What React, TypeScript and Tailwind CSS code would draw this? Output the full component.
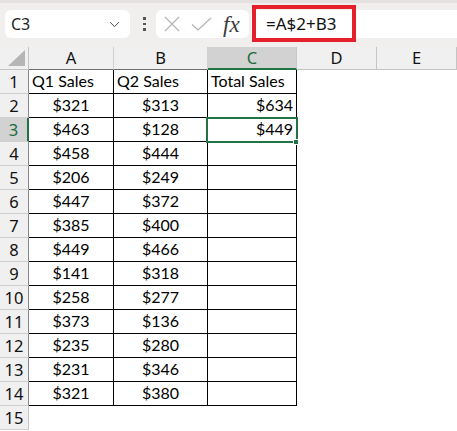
import { ChevronDown } from "lucide-react";

const colWidths = "grid-cols-[29px_85px_94px_89px_80px_80px]";

const rows: (number | string | null)[][] = [
  ["Q1 Sales", "Q2 Sales", "Total Sales"],
  [321, 313, 634],
  [463, 128, 449],
  [458, 444, null],
  [206, 249, null],
  [447, 372, null],
  [385, 400, null],
  [449, 466, null],
  [141, 318, null],
  [258, 277, null],
  [373, 136, null],
  [235, 280, null],
  [231, 346, null],
  [321, 380, null],
];

const cellFont = { fontFamily: "Lato, 'Liberation Sans', sans-serif" };
const uiFont = { fontFamily: "'Noto Sans', 'Open Sans', sans-serif" };

function Toolbar() {
  return (
    <div className="relative h-[47px] bg-[#f1eeee]">
      <div className="h-[3px] bg-[#e4e0e0]" />
      <div className="flex items-center pt-[7px]" style={uiFont}>
        <div className="ml-[5px] flex h-[28px] w-[125px] items-center justify-between rounded-md bg-white pl-[6px] pr-[7px] text-[16px] text-[#1f1f1f]">
          <span>C3</span>
          <ChevronDown className="h-[17px] w-[17px] text-[#444]" strokeWidth={1.4} />
        </div>
        <div className="ml-[13px] flex w-[3px] flex-col gap-[3px]">
          <span className="h-[2.5px] w-[2.5px] bg-[#555]" />
          <span className="h-[2.5px] w-[2.5px] bg-[#555]" />
          <span className="h-[2.5px] w-[2.5px] bg-[#555]" />
        </div>
        <div className="ml-[10px] flex h-[28px] w-[93px] items-center rounded-md bg-white pl-[8px]">
          <svg width="16" height="16" viewBox="0 0 16 16" className="text-[#b4b4b4]">
            <path d="M1 1 L15 15 M15 1 L1 15" stroke="currentColor" strokeWidth="1.2" fill="none" />
          </svg>
          <svg width="21" height="14" viewBox="0 0 21 14" className="ml-[11px] text-[#b4b4b4]">
            <path d="M1 7.5 L7 13 L20 1" stroke="currentColor" strokeWidth="1.2" fill="none" />
          </svg>
          <span
            className="ml-[11px] text-[23px] italic leading-none text-[#3a3a3a]"
            style={{ fontFamily: "'Liberation Serif', serif" }}
          >
            fx
          </span>
        </div>
        <div className="ml-[2px] flex h-[28px] flex-1 items-center rounded-l-md bg-white pl-[15px] text-[17px] text-[#111]">
          =A$2+B3
        </div>
      </div>
      <div className="absolute left-[252px] top-[5px] h-[37px] w-[104px] border-4 border-[#e51f2b]" />
    </div>
  );
}

function ColHeader({ label, active, table }: { label: string; active?: boolean; table?: boolean }) {
  return (
    <div
      className={
        active
          ? "flex items-center justify-center border-r border-b-2 border-r-[#c8c8c8] border-b-[#217346] bg-[#d2d2d2] pt-[1px] text-[#1c6b3f]"
          : table
            ? "flex items-center justify-center border-r border-b border-r-[#d0d0d0] border-b-[#6e6e6e] bg-[#f0f0f0] text-[#111]"
            : "flex items-center justify-center border-r border-b border-r-[#c4c4c4] border-b-[#c4c4c4] bg-[#f0f0f0] text-[#111]"
      }
    >
      {label}
    </div>
  );
}

function RowHeader({ n }: { n: number }) {
  const active = n === 3;
  return (
    <div
      className={
        active
          ? "flex items-center justify-center border-r-2 border-b border-r-[#217346] border-b-[#cfcfcf] bg-[#d2d2d2] pt-[1px] text-[#1c6b3f]"
          : n <= 14
            ? "flex items-center justify-center border-r border-b border-r-[#8a8a8a] border-b-[#cfcfcf] bg-[#f0f0f0] pt-[1px] text-[#111]"
            : "flex items-center justify-center border-r border-b border-r-[#c4c4c4] border-b-[#cfcfcf] bg-[#f0f0f0] pt-[1px] text-[#111]"
      }
      style={uiFont}
    >
      {n}
    </div>
  );
}

function Cell({ value, col, row }: { value: number | string | null; col: number; row: number }) {
  const text = value === null ? "" : typeof value === "number" ? `$${value}` : value;
  const align =
    row === 0 ? "justify-start pl-[3px]" : col === 2 ? "justify-end pr-[3px]" : "justify-center";
  return (
    <div
      className={`flex items-end border-r border-b border-black pb-[1px] text-[16px] leading-none text-black ${align}`}
      style={cellFont}
    >
      <span className="pb-[3px]">{text}</span>
    </div>
  );
}

export default function App() {
  return (
    <div className="h-[431px] w-[457px] overflow-hidden bg-white">
      <Toolbar />
      <div className="relative">
        <div className={`grid ${colWidths} grid-rows-[23px_repeat(15,24px)] text-[16.5px]`} style={uiFont}>
          <div className="relative border-r border-b border-r-[#c4c4c4] border-b-[#c4c4c4] bg-[#f0f0f0]">
            <svg width="17" height="16" viewBox="0 0 17 16" className="absolute bottom-[3px] right-[3px]">
              <polygon points="17,0 17,16 0,16" fill="#b5b5b5" />
            </svg>
          </div>
          <ColHeader label="A" table />
          <ColHeader label="B" table />
          <ColHeader label="C" active />
          <ColHeader label="D" />
          <ColHeader label="E" />
          {Array.from({ length: 15 }, (_, r) => (
            <div key={r} className="contents">
              <RowHeader n={r + 1} />
              {r < 14 ? (
                rows[r].map((v, c) => <Cell key={c} value={v} col={c} row={r} />)
              ) : (
                <>
                  <div />
                  <div />
                  <div />
                </>
              )}
              <div />
              <div />
            </div>
          ))}
        </div>
        <div className="absolute left-[206px] top-[70px] h-[26px] w-[92px] border-2 border-[#217346]" />
        <div className="absolute left-[293px] top-[92px] h-[6px] w-[6px] border border-white bg-[#217346]" />
      </div>
    </div>
  );
}
